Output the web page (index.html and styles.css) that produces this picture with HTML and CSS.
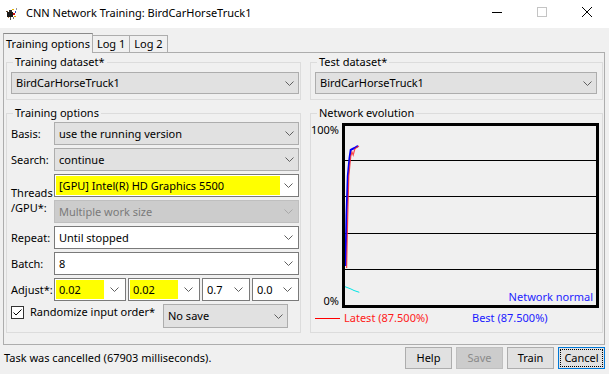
FILE: index.html
```html
<!DOCTYPE html>
<html lang="en">
<head>
  <meta charset="UTF-8">
  <title>CNN Network Training: BirdCarHorseTruck1</title>
  <link rel="stylesheet" href="styles.css">
</head>
<body>

  <div class="titlebar">
    <svg class="appicon" viewBox="0 0 16 16">
      <rect x="1" y="6" width="2" height="1" fill="#6b4a2a"/>
      <rect x="2" y="7" width="6" height="5" fill="#1a1a1a"/>
      <rect x="4" y="5" width="3" height="2" fill="#2a2a2a"/>
      <rect x="8" y="8" width="2" height="2" fill="#d01010"/>
      <rect x="7" y="4" width="2" height="1" fill="#e0b000"/>
      <rect x="10" y="6" width="1" height="2" fill="#3050c0"/>
      <rect x="9" y="11" width="2" height="1" fill="#e0a000"/>
      <rect x="5" y="12" width="1" height="3" fill="#555"/>
      <rect x="8" y="12" width="1" height="2" fill="#777"/>
      <rect x="11" y="3" width="1" height="2" fill="#999"/>
      <rect x="3" y="12" width="1" height="1" fill="#c08040"/>
    </svg>
    <span class="title">CNN Network Training: BirdCarHorseTruck1</span>
    <div class="winctl">
      <span class="wbtn"><svg viewBox="0 0 10 10"><line x1="0" y1="5.5" x2="10" y2="5.5"/></svg></span>
      <span class="wbtn off"><svg viewBox="0 0 10 10"><rect x="0.5" y="0.5" width="9" height="9"/></svg></span>
      <span class="wbtn"><svg viewBox="0 0 10 10"><line x1="0" y1="0" x2="10" y2="10"/><line x1="10" y1="0" x2="0" y2="10"/></svg></span>
    </div>
  </div>

  <div class="tabs">
    <div class="tab active">Training options</div>
    <div class="tab">Log 1</div>
    <div class="tab">Log 2</div>
  </div>

  <div class="panel">
    <div class="col">
      <fieldset class="group">
        <legend>Training dataset*</legend>
        <div class="combo short"><span class="val">BirdCarHorseTruck1</span><svg class="arrow" viewBox="0 0 9 5"><polyline points="0.5,0.5 4.5,4.5 8.5,0.5"/></svg></div>
      </fieldset>

      <fieldset class="group grow">
        <legend>Training options</legend>
        <div class="form">
          <label>Basis:</label>
          <div class="combo"><span class="val">use the running version</span><svg class="arrow" viewBox="0 0 9 5"><polyline points="0.5,0.5 4.5,4.5 8.5,0.5"/></svg></div>

          <label>Search:</label>
          <div class="combo"><span class="val">continue</span><svg class="arrow" viewBox="0 0 9 5"><polyline points="0.5,0.5 4.5,4.5 8.5,0.5"/></svg></div>

          <label class="two">Threads<br>/GPU*:</label>
          <div class="combo edit"><span class="field hl">[GPU] Intel(R) HD Graphics 5500</span><svg class="arrow" viewBox="0 0 9 5"><polyline points="0.5,0.5 4.5,4.5 8.5,0.5"/></svg></div>
          <div class="combo disabled"><span class="field">Multiple work size</span><svg class="arrow" viewBox="0 0 9 5"><polyline points="0.5,0.5 4.5,4.5 8.5,0.5"/></svg></div>

          <label>Repeat:</label>
          <div class="combo edit"><span class="field">Until stopped</span><svg class="arrow" viewBox="0 0 9 5"><polyline points="0.5,0.5 4.5,4.5 8.5,0.5"/></svg></div>

          <label>Batch:</label>
          <div class="combo edit"><span class="field">8</span><svg class="arrow" viewBox="0 0 9 5"><polyline points="0.5,0.5 4.5,4.5 8.5,0.5"/></svg></div>

          <label>Adjust*:</label>
          <div class="adjust">
            <div class="combo edit w72"><span class="field hl">0.02</span><svg class="arrow" viewBox="0 0 9 5"><polyline points="0.5,0.5 4.5,4.5 8.5,0.5"/></svg></div>
            <div class="combo edit w72"><span class="field hl">0.02</span><svg class="arrow" viewBox="0 0 9 5"><polyline points="0.5,0.5 4.5,4.5 8.5,0.5"/></svg></div>
            <div class="combo edit w48"><span class="field">0.7</span><svg class="arrow" viewBox="0 0 9 5"><polyline points="0.5,0.5 4.5,4.5 8.5,0.5"/></svg></div>
            <div class="combo edit w47"><span class="field">0.0</span><svg class="arrow" viewBox="0 0 9 5"><polyline points="0.5,0.5 4.5,4.5 8.5,0.5"/></svg></div>
          </div>

          <div class="checkrow">
            <svg class="check" viewBox="0 0 13 13"><rect x="0.5" y="0.5" width="12" height="12"/><polyline points="2.5,6.5 5,9 10.5,3.5"/></svg>
            <span class="checklabel">Randomize input order*</span>
            <div class="combo save"><span class="val">No save</span><svg class="arrow" viewBox="0 0 9 5"><polyline points="0.5,0.5 4.5,4.5 8.5,0.5"/></svg></div>
          </div>
        </div>
      </fieldset>
    </div>

    <div class="col">
      <fieldset class="group">
        <legend>Test dataset*</legend>
        <div class="combo short test"><span class="val">BirdCarHorseTruck1</span><svg class="arrow" viewBox="0 0 9 5"><polyline points="0.5,0.5 4.5,4.5 8.5,0.5"/></svg></div>
      </fieldset>

      <fieldset class="group grow">
        <legend>Network evolution</legend>
        <div class="chartrow">
          <div class="axis">
            <span>100%</span>
            <span>0%</span>
          </div>
          <div class="chart">
            <svg width="251" height="179" viewBox="0 0 251 179">
              <line x1="0" y1="34.5" x2="251" y2="34.5" class="grid"/>
              <line x1="0" y1="70.5" x2="251" y2="70.5" class="grid"/>
              <line x1="0" y1="107.5" x2="251" y2="107.5" class="grid"/>
              <line x1="0" y1="143.5" x2="251" y2="143.5" class="grid"/>
              <polyline class="best" points="0.5,140 1.5,90 2.8,50 4.5,32 5.7,24 7.5,23 9.5,22 11,21 13,20"/>
              <polyline class="latest" points="1.6,142 2.6,95 3.8,50 5.8,30 7,26 8.2,29 9.8,23 11.5,21.5 14,20"/>
              <polyline class="diff" points="0,160.7 6,163 9,164.5 14.3,166.3"/>
            </svg>
            <span class="status-net">Network normal</span>
          </div>
        </div>
        <div class="legendrow">
          <span class="item latest-item"><i class="swatch"></i>Latest (87.500%)</span>
          <span class="item best-item">Best (87.500%)</span>
        </div>
      </fieldset>
    </div>
  </div>

  <div class="statusbar">
    <span class="status">Task was cancelled (67903 milliseconds).</span>
    <div class="buttons">
      <button class="btn">Help</button>
      <button class="btn" disabled>Save</button>
      <button class="btn">Train</button>
      <button class="btn focus">Cancel</button>
    </div>
  </div>

</body>
</html>
```

FILE: styles.css
```css
body {
  margin: 0;
  width: 609px;
  height: 374px;
  overflow: hidden;
  background: #f0f0f0;
  color: #000;
  font-family: "Noto Sans", "Liberation Sans", sans-serif;
  font-size: 11px;
  line-height: 14px;
}

/* title bar */
.titlebar {
  height: 28px;
  background: #fff;
  display: flex;
  align-items: center;
}
.appicon { width: 16px; height: 16px; margin: 0 5px 2px 5px; }
.title { flex: 1; font-size: 11px; padding-bottom: 2px; }
.winctl { display: flex; align-self: flex-start; padding-top: 7px; }
.wbtn { width: 45px; display: flex; justify-content: center; }
.wbtn svg { width: 10px; height: 10px; stroke: #000; stroke-width: 1; fill: none; }
.wbtn.off svg { stroke: #c4c4c4; }

/* tabs */
.tabs {
  display: flex;
  align-items: flex-end;
  margin-top: 5px;
  padding-left: 3px;
  height: 19px;
}
.tab {
  height: 17px;
  box-sizing: border-box;
  border: 1px solid #adadad;
  border-bottom: none;
  padding: 1px 4px 0;
  margin-left: -1px;
}
.tab.active {
  height: 20px;
  margin-left: 0;
  margin-bottom: -1px;
  padding: 3px 2px 0;
  background: #f0f0f0;
  border-top-color: #8a8a8a;
  position: relative;
  z-index: 1;
}

/* main pane */
.panel {
  height: 293px;
  box-sizing: border-box;
  border: 1px solid #adadad;
  width: 602px;
  margin-left: 3px;
  padding: 2px 1px 0 2px;
  display: grid;
  grid-template-columns: 295px 293px;
  column-gap: 9px;
  align-items: start;
}
.col { display: flex; flex-direction: column; }

.group {
  margin: 0;
  border: 1px solid #dcdcdc;
  padding: 3px 1px 5px 4px;
  min-width: 0;
}
.group legend {
  padding: 0 2px;
  margin-left: 2px;
  line-height: 14px;
}
.group.grow { margin-top: 6px; padding: 2px 1px 4px 4px; height: 227px; box-sizing: border-box; }
.col:last-child .group { padding-right: 3px; }

/* combo boxes */
.combo {
  display: flex;
  align-items: center;
  height: 23px;
  box-sizing: border-box;
  border: 1px solid #adadad;
  background: #e1e1e1;
  padding-left: 4px;
}
.combo.short { height: 22px; }
.combo.test { margin-right: 2px; }
.combo .val { flex: 1; white-space: nowrap; overflow: hidden; }
.arrow {
  width: 9px;
  height: 5px;
  margin: 0 4px;
  fill: none;
  stroke: #5f5f5f;
  stroke-width: 1;
  flex: none;
}
.combo.edit, .combo.disabled { padding: 1px; }
.combo.edit { background: #fff; border-color: #7a7a7a; }
.combo.disabled { background: #cccccc; border-color: #bfbfbf; color: #7a7a7a; }
.combo.disabled .arrow { stroke: #a8a8a8; }
.field {
  flex: 1;
  align-self: stretch;
  display: flex;
  align-items: center;
  padding-left: 3px;
  white-space: nowrap;
  overflow: hidden;
}
.hl { background: #ffff00; }

/* form grid */
.form {
  display: grid;
  grid-template-columns: 43px 245px;
  grid-auto-rows: 23px;
  row-gap: 3px;
}
.form label { align-self: center; white-space: nowrap; }
.form label.two { grid-row: span 2; line-height: 15px; padding-top: 2px; }
.form .combo.disabled { grid-column: 2; }

.adjust { display: flex; gap: 2px; }
.w72 { width: 72px; }
.w48 { width: 48px; }
.w47 { width: 47px; }
.adjust .arrow { margin: 0 5px 0 4px; }
.adjust .w72 .arrow { margin: 0 5px 0 6px; }

.checkrow {
  grid-column: 1 / 3;
  display: flex;
  align-items: flex-start;
  height: 24px;
}
.check {
  width: 13px;
  height: 13px;
  margin-top: 2px;
  fill: #fff;
  stroke: #333;
  stroke-width: 1;
  flex: none;
}
.check polyline { fill: none; stroke: #000; }
.checklabel { margin-left: 6px; margin-top: 1px; }
.combo.save { width: 125px; height: 24px; margin-left: auto; margin-right: 11px; }

/* chart */
.chartrow { display: flex; margin-top: 1px; }
.axis {
  width: 27px;
  padding-right: 3px;
  box-sizing: border-box;
  display: flex;
  flex-direction: column;
  justify-content: space-between;
  align-items: flex-end;
}
.chart {
  width: 257px;
  height: 185px;
  box-sizing: border-box;
  border: 3px solid #000;
  position: relative;
}
.chart svg { display: block; }
.chart .grid { stroke: #000; stroke-width: 1; }
.chart .best { fill: none; stroke: #0000ff; stroke-width: 2; }
.chart .latest { fill: none; stroke: #ff2020; stroke-width: 1.2; opacity: 0.8; }
.chart .diff { fill: none; stroke: #00e5e5; stroke-width: 1; }
.status-net {
  position: absolute;
  right: 3px;
  bottom: 1px;
  color: #2424ff;
}

.legendrow {
  display: flex;
  margin-top: 3px;
  padding-left: 0;
}
.item { white-space: nowrap; }
.latest-item { width: 157px; color: #ff1a1a; display: flex; align-items: center; }
.best-item { color: #1a1aff; }
.swatch {
  display: inline-block;
  width: 25px;
  height: 1px;
  background: #ff0000;
  margin-right: 4px;
}

/* bottom */
.statusbar {
  display: flex;
  height: 29px;
  padding: 2px 4px 0 4px;
  box-sizing: border-box;
}
.status { flex: 1; margin-top: 4px; }
.buttons { display: flex; gap: 4px; }
.btn {
  width: 47px;
  height: 22px;
  padding: 0;
  border: 1px solid #adadad;
  background: #e1e1e1;
  font: inherit;
  color: #000;
}
.btn:disabled { background: #cccccc; border-color: #bfbfbf; color: #8a8a8a; }
.btn.focus {
  border-color: #0078d7;
  outline: 1px dotted #000;
  outline-offset: -3px;
}
```
